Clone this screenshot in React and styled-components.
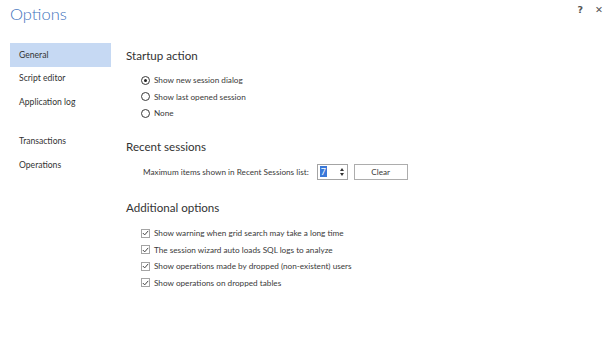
import React from 'react';
import styled, { createGlobalStyle } from 'styled-components';

const GlobalStyle = createGlobalStyle`
  html, body {
    margin: 0;
    padding: 0;
    background: #ffffff;
  }
  body {
    font-family: 'Lato', 'Noto Sans', sans-serif;
    color: #3a3a3a;
  }
`;

const Window = styled.div`
  width: 612px;
  height: 350px;
  display: flex;
  flex-direction: column;
  background: #fff;
`;

const TitleBar = styled.header`
  display: flex;
  align-items: flex-start;
  justify-content: space-between;
  height: 43px;
  padding: 0 9px 0 10px;
  box-sizing: border-box;
`;

const Title = styled.h1`
  margin: 4px 0 0;
  font-size: 16.5px;
  font-weight: 300;
  color: #3f73bd;
`;

const WindowControls = styled.div`
  display: flex;
  gap: 12px;
  margin-top: 4px;
  font-family: 'DejaVu Sans', sans-serif;
  font-size: 9.5px;
  font-weight: 700;
  color: #555;
`;

const Body = styled.div`
  display: flex;
  flex: 1;
`;

const Sidebar = styled.nav`
  width: 101px;
  margin-left: 10px;
  display: flex;
  flex-direction: column;
`;

const NavItem = styled.div`
  height: 23.5px;
  display: flex;
  align-items: center;
  padding-left: 9px;
  font-size: 8.6px;
  color: #333;
  background: ${({ active }) => (active ? '#c6d9f3' : 'transparent')};
  margin-top: ${({ gapAbove }) => (gapAbove ? '16px' : '0')};
`;

const Main = styled.main`
  flex: 1;
  padding-left: 15px;
`;

const Section = styled.section`
  margin-bottom: ${({ spacing }) => spacing || 0}px;
`;

const Heading = styled.h2`
  margin: 0;
  height: 24px;
  display: flex;
  align-items: center;
  font-size: 11.6px;
  font-weight: 400;
  color: #333;
`;

const OptionList = styled.div`
  display: flex;
  flex-direction: column;
  padding-left: 15px;
  margin-top: 5px;
`;

const OptionRow = styled.label`
  display: flex;
  align-items: center;
  gap: 4px;
  height: 16.6px;
  font-size: 8.2px;
  color: #3a3a3a;
`;

const RadioCircle = styled.span`
  width: 9px;
  height: 9px;
  border: 1px solid #3a3a3a;
  border-radius: 50%;
  box-sizing: border-box;
  display: flex;
  align-items: center;
  justify-content: center;

  &::after {
    content: '';
    width: 3px;
    height: 3px;
    border-radius: 50%;
    background: ${({ checked }) => (checked ? '#222' : 'transparent')};
  }
`;

const CheckBox = styled.span`
  width: 9px;
  height: 9px;
  border: 1px solid #a4a4a4;
  box-sizing: border-box;
  background: #fff;
  display: flex;
  align-items: center;
  justify-content: center;
`;

const FieldRow = styled.div`
  display: flex;
  align-items: center;
  height: 16px;
  margin-top: 5px;
  padding-left: 17px;
  font-size: 8.2px;
  color: #3a3a3a;
`;

const Spinner = styled.div`
  width: 31px;
  height: 16px;
  margin-left: 8px;
  border: 1px solid #a4a4a4;
  box-sizing: border-box;
  display: flex;
  align-items: center;
  justify-content: space-between;
  padding: 0 3px 0 2px;
`;

const SelectedValue = styled.span`
  background: #3a78d8;
  color: #fff;
  font-size: 9px;
  line-height: 11px;
  padding: 0 1px;
`;

const Arrows = styled.span`
  display: flex;
  flex-direction: column;
  gap: 2px;
`;

const Button = styled.button`
  width: 54px;
  height: 16px;
  margin-left: 6px;
  border: 1px solid #adadad;
  background: #fff;
  font-family: inherit;
  font-size: 8.2px;
  color: #3a3a3a;
  padding: 0;
`;

const Tick = () => (
  <svg width="7" height="6" viewBox="0 0 7 6">
    <path d="M0.8 3 L2.7 4.9 L6.2 0.9" fill="none" stroke="#444" strokeWidth="1" />
  </svg>
);

const Caret = ({ up }) => (
  <svg width="4" height="3" viewBox="0 0 4 3">
    <path d={up ? 'M0 3 L2 0 L4 3 Z' : 'M0 0 L2 3 L4 0 Z'} fill="#333" />
  </svg>
);

const navItems = [
  { label: 'General', active: true },
  { label: 'Script editor' },
  { label: 'Application log' },
  { label: 'Transactions', gapAbove: true },
  { label: 'Operations' },
];

const startupOptions = [
  { label: 'Show new session dialog', checked: true },
  { label: 'Show last opened session' },
  { label: 'None' },
];

const additionalOptions = [
  'Show warning when grid search may take a long time',
  'The session wizard auto loads SQL logs to analyze',
  'Show operations made by dropped (non-existent) users',
  'Show operations on dropped tables',
];

export default function App() {
  return (
    <Window>
      <GlobalStyle />
      <TitleBar>
        <Title>Options</Title>
        <WindowControls>
          <span>?</span>
          <span>✕</span>
        </WindowControls>
      </TitleBar>
      <Body>
        <Sidebar>
          {navItems.map((item) => (
            <NavItem key={item.label} active={item.active} gapAbove={item.gapAbove}>
              {item.label}
            </NavItem>
          ))}
        </Sidebar>
        <Main>
          <Section spacing={13}>
            <Heading>Startup action</Heading>
            <OptionList>
              {startupOptions.map((opt) => (
                <OptionRow key={opt.label}>
                  <RadioCircle checked={opt.checked} />
                  {opt.label}
                </OptionRow>
              ))}
            </OptionList>
          </Section>
          <Section spacing={16}>
            <Heading>Recent sessions</Heading>
            <FieldRow>
              Maximum items shown in Recent Sessions list:
              <Spinner>
                <SelectedValue>7</SelectedValue>
                <Arrows>
                  <Caret up />
                  <Caret />
                </Arrows>
              </Spinner>
              <Button>Clear</Button>
            </FieldRow>
          </Section>
          <Section>
            <Heading>Additional options</Heading>
            <OptionList>
              {additionalOptions.map((label) => (
                <OptionRow key={label}>
                  <CheckBox>
                    <Tick />
                  </CheckBox>
                  {label}
                </OptionRow>
              ))}
            </OptionList>
          </Section>
        </Main>
      </Body>
    </Window>
  );
}
